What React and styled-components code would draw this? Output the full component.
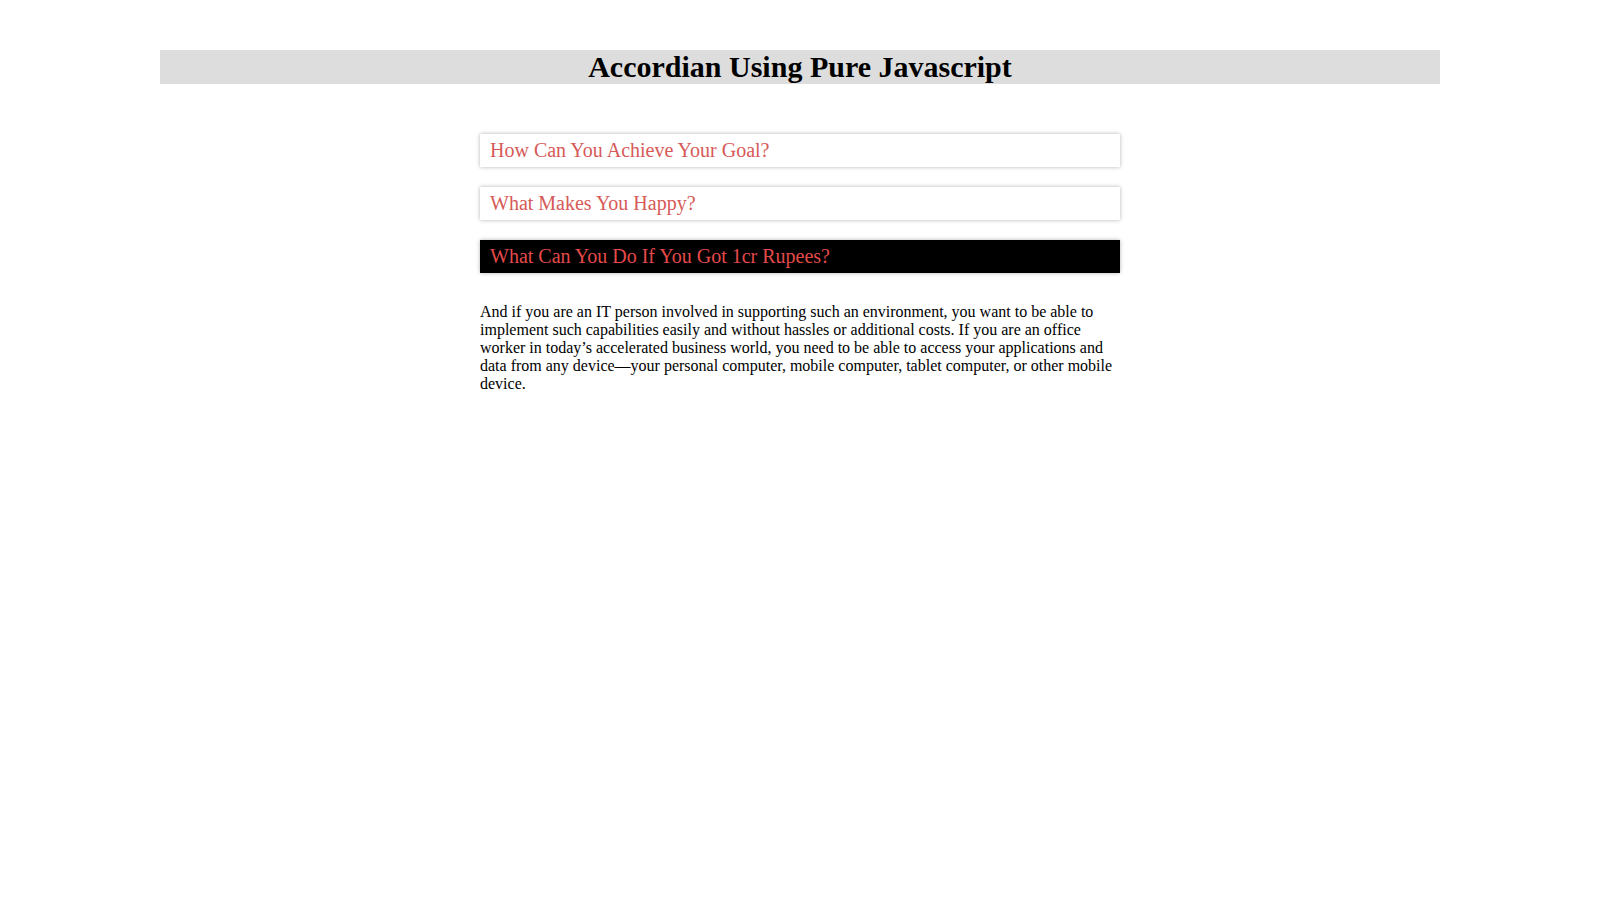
import React, { useState } from "react";
import styled, { createGlobalStyle } from "styled-components";

const GlobalStyle = createGlobalStyle`
  body {
    margin: 8px;
    font-family: "Liberation Serif", "Times New Roman", serif;
    background: #fff;
    color: #000;
  }
`;

const Header = styled.h1`
  width: 80vw;
  margin: 42px auto 0;
  background: #dddddd;
  text-align: center;
  font-size: 30px;
  font-weight: bold;
  line-height: 34px;
  height: 34px;
`;

const Wrapper = styled.div`
  width: 640px;
  margin: 50px auto 0;
  display: flex;
  flex-direction: column;
  gap: 20px;
`;

const Item = styled.button`
  display: block;
  width: 100%;
  height: 33px;
  padding: 0 10px;
  text-align: left;
  border: none;
  outline: none;
  cursor: pointer;
  font-family: "Liberation Serif", "Times New Roman", serif;
  font-size: 20px;
  line-height: 33px;
  color: ${(p) => (p.$active ? "#e44a4a" : "#d65a58")};
  background: ${(p) => (p.$active ? "#000" : "#fff")};
  box-shadow: 0 0 4px rgba(0, 0, 0, 0.3);
`;

const Panel = styled.p`
  margin: 10px 0 0;
  font-size: 16px;
  line-height: 18px;
`;

const items = [
  {
    title: "How Can You Achieve Your Goal?",
    text: "Set clear targets, plan your steps and keep working on them every day.",
  },
  {
    title: "What Makes You Happy?",
    text: "Spending time with the people you love and doing the things you enjoy.",
  },
  {
    title: "What Can You Do If You Got 1cr Rupees?",
    text: "And if you are an IT person involved in supporting such an environment, you want to be able to implement such capabilities easily and without hassles or additional costs. If you are an office worker in today\u2019s accelerated business world, you need to be able to access your applications and data from any device\u2014your personal computer, mobile computer, tablet computer, or other mobile device.",
  },
];

const App = () => {
  const [open, setOpen] = useState(2);

  return (
    <>
      <GlobalStyle />
      <Header>Accordian Using Pure Javascript</Header>
      <Wrapper>
        {items.map((item, i) => (
          <React.Fragment key={item.title}>
            <Item $active={open === i} onClick={() => setOpen(open === i ? -1 : i)}>
              {item.title}
            </Item>
            {open === i && <Panel>{item.text}</Panel>}
          </React.Fragment>
        ))}
      </Wrapper>
    </>
  );
};

export default App;
